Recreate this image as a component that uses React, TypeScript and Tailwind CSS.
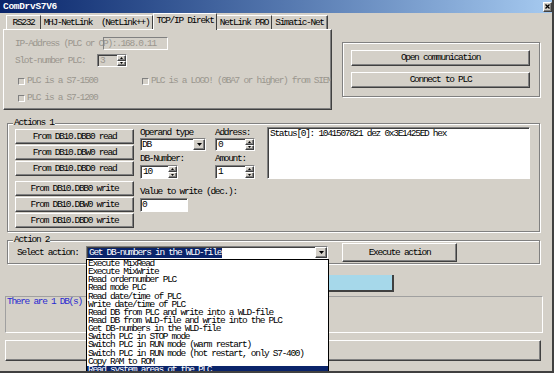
import React from "react";

const raised =
  "border border-t-white border-l-white border-r-[#404040] border-b-[#404040] shadow-[inset_-1px_-1px_0_#808080]";
const sunken =
  "border border-t-[#808080] border-l-[#808080] border-r-white border-b-white shadow-[inset_1px_1px_0_#404040]";
const etched = "border border-[#808080] shadow-[inset_1px_1px_0_#fff,1px_1px_0_#fff]";

function Tri({ up = false, w = 5, h = 3 }: { up?: boolean; w?: number; h?: number }) {
  return (
    <svg width={w} height={h} viewBox={`0 0 ${w} ${h}`} className="block overflow-visible">
      <polygon points={up ? `0,${h} ${w},${h} ${w / 2},0` : `0,0 ${w},0 ${w / 2},${h}`} fill="#000" />
    </svg>
  );
}

function Btn({ label, className = "" }: { label: string; className?: string }) {
  return (
    <div className={`${raised} bg-[#d4d0c8] flex items-center justify-center whitespace-pre ${className}`}>
      {label}
    </div>
  );
}

function Spinner({ value, className = "", disabled = false }: { value: string; className?: string; disabled?: boolean }) {
  return (
    <div className={`${sunken} ${disabled ? "bg-[#d4d0c8] text-[#9a968e]" : "bg-white"} flex ${className}`}>
      <div className="flex-1 pl-[2px] flex items-center overflow-hidden">{value}</div>
      <div className="w-[9px] flex flex-col">
        <div className={`${raised} bg-[#d4d0c8] flex-1 flex items-center justify-center`}>
          <Tri up w={3} h={2} />
        </div>
        <div className={`${raised} bg-[#d4d0c8] flex-1 flex items-center justify-center`}>
          <Tri w={3} h={2} />
        </div>
      </div>
    </div>
  );
}

function Combo({ children, className = "" }: { children: React.ReactNode; className?: string }) {
  return (
    <div className={`${sunken} bg-white flex ${className}`}>
      <div className="flex-1 flex items-center overflow-hidden">{children}</div>
      <div className={`${raised} bg-[#d4d0c8] w-[12px] flex items-center justify-center`}>
        <Tri w={5} h={3} />
      </div>
    </div>
  );
}

function Group({ label, className = "", children }: { label?: string; className?: string; children?: React.ReactNode }) {
  return (
    <div className={`relative ${etched} ${className}`}>
      {label && (
        <span className="absolute left-[5px] top-[-6px] px-[1px] bg-[#d4d0c8] leading-[10px] whitespace-nowrap">{label}</span>
      )}
      {children}
    </div>
  );
}

function Check({ label }: { label: string }) {
  return (
    <div className="flex items-center whitespace-nowrap shrink-0">
      <div className="shrink-0 w-[7px] h-[7px] border border-t-[#808080] border-l-[#808080] border-r-white border-b-white bg-[#d4d0c8]" />
      <span className="ml-[2px] text-[#9a968e]">{label}</span>
    </div>
  );
}

const actions = [
  "Execute MixRead",
  "Execute MixWrite",
  "Read ordernumber PLC",
  "Read mode PLC",
  "Read date/time of PLC",
  "Write date/time of PLC",
  "Read DB from PLC and write into a WLD-file",
  "Read DB from WLD-file and write into the PLC",
  "Get DB-numbers in the WLD-file",
  "Switch PLC in STOP mode",
  "Switch PLC in RUN mode (warm restart)",
  "Switch PLC in RUN mode (hot restart, only S7-400)",
  "Copy RAM to ROM",
  "Read system areas of the PLC",
];

export default function App() {
  return (
    <div className="relative w-[554px] h-[373px] overflow-hidden bg-[#d4d0c8] border-r-2 border-b-2 border-r-[#404040] border-b-[#404040] font-['Liberation_Mono','Courier_New',monospace] text-[9.5px] tracking-[-1.3px] leading-[10px] text-black flex flex-col">
      {/* title bar */}
      <div className="h-[13px] shrink-0 flex items-center justify-between bg-linear-to-r from-[#0a246a] to-[#a6caf0] pl-[3px]">
        <span className="text-white font-bold text-[9.5px] tracking-[-0.3px] leading-[13px]">ComDrvS7V6</span>
        <div className={`w-[9px] h-[10px] bg-[#d4d0c8] ${raised} flex items-center justify-center`}>
          <svg width="5" height="5" viewBox="0 0 5 5" className="block">
            <path d="M0.5 0.5 L4.5 4.5 M4.5 0.5 L0.5 4.5" stroke="#000" strokeWidth="1.3" />
          </svg>
        </div>
      </div>

      {/* top section */}
      <div className="h-[97px] shrink-0 flex">
        {/* tab control */}
        <div className="ml-[3px] w-[329px] shrink-0 flex flex-col">
          <div className="h-[16px] flex items-end pl-[3px]">
            <div className="shrink-0 w-[35px] h-[14px] border-t border-l border-t-white border-l-white border-r border-r-[#404040] flex items-center justify-center">
              RS232
            </div>
            <div className="shrink-0 w-[112px] h-[14px] border-t border-t-white border-r border-r-[#404040] flex items-center justify-center whitespace-pre">
              {"MHJ-NetLink  (NetLink++)"}
            </div>
            <div className="shrink-0 relative z-10 -mb-[1px] w-[64px] h-[17px] bg-[#d4d0c8] border-t border-l border-t-white border-l-white border-r border-r-[#404040] flex items-center justify-center pb-[2px]">
              TCP/IP Direkt
            </div>
            <div className="shrink-0 w-[55px] h-[14px] border-t border-t-white border-r border-r-[#404040] flex items-center justify-center">
              NetLink PRO
            </div>
            <div className="shrink-0 w-[56px] h-[14px] border-t border-t-white border-r border-r-[#404040] shadow-[inset_-1px_0_0_#808080] flex items-center justify-center">
              Simatic-Net
            </div>
          </div>
          <div className={`h-[81px] ${raised} overflow-hidden flex flex-col pl-[11px]`}>
            <div className="mt-[7px] h-[13px] flex items-center text-[#9a968e] whitespace-pre">
              <span className="shrink-0">IP-Address (PLC or C</span>
              <div className={`shrink-0 w-[65px] h-[13px] ${sunken} shadow-none flex items-center`}>
                <span className="-ml-[1px]">P):.168.0.11</span>
              </div>
            </div>
            <div className="mt-[4px] h-[13px] flex items-center text-[#9a968e]">
              <span className="shrink-0 w-[82px]">Slot-number PLC:</span>
              <Spinner value="3" disabled className="shrink-0 w-[30px] h-[13px]" />
            </div>
            <div className="mt-[9px] h-[10px] flex items-center pl-[3px]">
              <div className="shrink-0 w-[124px]">
                <Check label="PLC is a S7-1500" />
              </div>
              <Check label="PLC is a LOGO! (0BA7 or higher) from SIEMENS" />
            </div>
            <div className="mt-[7px] h-[10px] flex items-center pl-[3px]">
              <Check label="PLC is a S7-1200" />
            </div>
          </div>
        </div>

        {/* connect group */}
        <Group className="shrink-0 ml-[10px] mt-[29px] w-[198px] h-[55px] flex flex-col pl-[8px] pt-[7px]">
          <Btn label="Open communication" className="w-[179px] h-[16px]" />
          <Btn label="Connect to PLC" className="w-[179px] h-[16px] mt-[6px]" />
        </Group>
      </div>

      {/* Actions 1 */}
      <Group label="Actions 1" className="shrink-0 ml-[7px] mt-[13px] w-[533px] h-[109px] flex items-start pl-[7px] pt-[5px]">
        <div className="shrink-0 w-[119px] flex flex-col">
          <Btn label="From DB10.DBB0 read" className="h-[15px]" />
          <Btn label="From DB10.DBW0 read" className="h-[15px] mt-[1px]" />
          <Btn label="From DB10.DBD0 read" className="h-[15px] mt-[1px]" />
          <Btn label="From DB10.DBB0 write" className="h-[15px] mt-[5px]" />
          <Btn label="From DB10.DBW0 write" className="h-[15px] mt-[1px]" />
          <Btn label="From DB10.DBD0 write" className="h-[15px] mt-[1px]" />
        </div>
        <div className="shrink-0 ml-[6px] -mt-[1px] w-[115px] flex flex-col">
          <div className="h-[9px] flex items-center whitespace-nowrap">
            <span className="w-[75px] shrink-0">Operand type</span>
            <span>Address:</span>
          </div>
          <div className="mt-[1px] flex">
            <Combo className="shrink-0 w-[66px] h-[13px]">
              <span className="pl-[1px]">DB</span>
            </Combo>
            <Spinner value="0" className="shrink-0 ml-[9px] w-[40px] h-[13px]" />
          </div>
          <div className="mt-[3px] h-[9px] flex items-center whitespace-nowrap">
            <span className="w-[75px] shrink-0">DB-Number:</span>
            <span>Amount:</span>
          </div>
          <div className="mt-[2px] flex">
            <Spinner value="10" className="shrink-0 w-[38px] h-[14px]" />
            <Spinner value="1" className="shrink-0 ml-[37px] w-[40px] h-[14px]" />
          </div>
          <div className="mt-[8px] h-[9px] flex items-center whitespace-nowrap">Value to write (dec.):</div>
          <div className={`mt-[2px] w-[48px] h-[14px] ${sunken} bg-white flex items-center pl-[1px]`}>0</div>
        </div>
        <div className={`shrink-0 ml-[12px] -mt-[2px] w-[263px] h-[52px] ${sunken} bg-white pl-[2px] pt-[1px] whitespace-nowrap`}>
          Status[0]: 1041507821 dez 0x3E1425ED hex
        </div>
      </Group>

      {/* Action 2 */}
      <Group label="Action 2" className="shrink-0 ml-[7px] mt-[8px] w-[533px] h-[24px] flex items-center pl-[9px] pt-[1px]">
        <span className="shrink-0 w-[69px] whitespace-nowrap">Select action:</span>
        <Combo className="shrink-0 w-[242px] h-[13px]">
          <span className="ml-[1px] px-[1px] bg-[#0a246a] text-white whitespace-nowrap leading-[10px]">
            Get DB-numbers in the WLD-file
          </span>
        </Combo>
        <Btn label="Execute action" className="shrink-0 ml-[14px] w-[115px] h-[19px]" />
      </Group>

      {/* progress bar */}
      <div className="shrink-0 mt-[11px] ml-[150px] w-[244px] h-[17px] bg-[#a6d8ea] border-r-2 border-b-2 border-r-[#404040] border-b-[#404040]" />

      {/* message box */}
      <div className="shrink-0 mt-[4px] ml-[5px] w-[538px] h-[37px] border border-t-[#a0a0a0] border-l-[#a0a0a0] border-r-white border-b-white text-[#2a2ad0] whitespace-nowrap pl-[1px]">
        There are 1 DB(s)
      </div>

      {/* big button */}
      <div className={`shrink-0 mt-[7px] ml-[5px] w-[536px] h-[21px] ${raised} bg-[#d4d0c8]`} />

      {/* dropdown list overlay */}
      <div className="absolute left-[86px] top-[259px] z-20 w-[243px] h-[120px] bg-white border border-black">
        {actions.map((a, i) => (
          <div
            key={a}
            className={`h-[8.15px] leading-[8.15px] pl-[1px] whitespace-nowrap ${
              i === actions.length - 1 ? "bg-[#0a246a] text-white" : ""
            }`}
          >
            {a}
          </div>
        ))}
      </div>
    </div>
  );
}
